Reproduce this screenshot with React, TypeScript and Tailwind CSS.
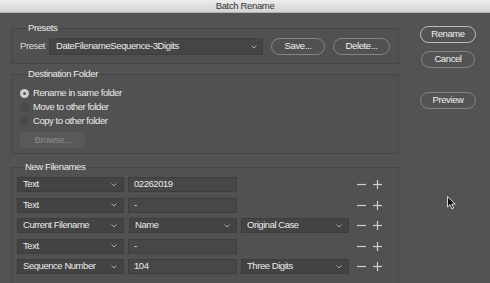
import React from 'react';

const font = { fontFamily: '"Liberation Sans", Arial, sans-serif' };

const Chevron = () => (
  <svg width="6" height="4" viewBox="0 0 6 4" className="shrink-0">
    <polyline points="0.5,0.5 3,3 5.5,0.5" fill="none" stroke="#a8a8a8" strokeWidth="1" />
  </svg>
);

const Select: React.FC<{ label: string; w: string; className?: string }> = ({ label, w, className }) => (
  <div className={`${w} h-[15px] flex items-center justify-between pl-[5px] pr-[6px] bg-[#434343] border border-[#3d3d3d] text-[9.5px] tracking-[-0.45px] text-[#ebebeb] ${className || ''}`}>
    <span>{label}</span>
    <Chevron />
  </div>
);

const Field: React.FC<{ value: string }> = ({ value }) => (
  <div className="w-[109px] h-[15px] flex items-center pl-[5px] bg-[#474747] border border-[#3e3e3e] text-[9.5px] tracking-[-0.45px] text-[#ebebeb]">
    {value}
  </div>
);

const PillButton: React.FC<{ label: string; w: string; primary?: boolean; className?: string }> = ({ label, w, primary, className }) => (
  <div
    className={`${w} h-[17px] flex items-center justify-center rounded-full border text-[9.5px] tracking-[-0.4px] text-[#f0f0f0] ${
      primary ? 'border-[#bdbdbd]' : 'border-[#858585]'
    } ${className || ''}`}
  >
    {label}
  </div>
);

const Radio: React.FC<{ label: string; checked?: boolean }> = ({ label, checked }) => (
  <div className="h-[14px] flex items-center">
    {checked ? (
      <div className="w-[9px] h-[9px] rounded-full bg-[#cfcfcf] flex items-center justify-center">
        <div className="w-[3px] h-[3px] rounded-full bg-[#5a5a5a]" />
      </div>
    ) : (
      <div className="w-[9px] h-[9px] rounded-full bg-[#4a4a4a] border border-[#474747]" />
    )}
    <span className="ml-[4px] text-[9.5px] tracking-[-0.45px] text-[#ebebeb]">{label}</span>
  </div>
);

const PlusMinus = () => (
  <div className="flex items-center ml-[8px] gap-[7px]">
    <svg width="9" height="9" viewBox="0 0 9 9">
      <line x1="0" y1="4.5" x2="9" y2="4.5" stroke="#cfcfcf" strokeWidth="1.2" />
    </svg>
    <svg width="9" height="9" viewBox="0 0 9 9">
      <line x1="0" y1="4.5" x2="9" y2="4.5" stroke="#cfcfcf" strokeWidth="1.2" />
      <line x1="4.5" y1="0" x2="4.5" y2="9" stroke="#cfcfcf" strokeWidth="1.2" />
    </svg>
  </div>
);

type Row = { first: string; second: { kind: 'field' | 'select'; value: string }; third?: string };

const rows: Row[] = [
  { first: 'Text', second: { kind: 'field', value: '02262019' } },
  { first: 'Text', second: { kind: 'field', value: '-' } },
  { first: 'Current Filename', second: { kind: 'select', value: 'Name' }, third: 'Original Case' },
  { first: 'Text', second: { kind: 'field', value: '-' } },
  { first: 'Sequence Number', second: { kind: 'field', value: '104' }, third: 'Three Digits' },
];

const Legend: React.FC<{ text: string }> = ({ text }) => (
  <legend className="ml-[6px] px-[2px] text-[9.5px] tracking-[-0.4px] leading-[12px] text-[#ebebeb]">{text}</legend>
);

export default function App() {
  return (
    <div className="w-[490px] h-[283px] bg-[#535353] overflow-hidden relative" style={font}>
      {/* title bar */}
      <div className="h-[13px] bg-gradient-to-b from-[#ececec] to-[#d4d4d4] border-b border-[#b4b4b4] flex items-center justify-center">
        <span className="text-[9.5px] tracking-[-0.35px] leading-none text-[#333]">Batch Rename</span>
      </div>

      <div className="flex">
        {/* left column */}
        <div className="ml-[11px] w-[388px] pt-[9px]">
          <fieldset className="border border-[#464646] bg-[#515151] px-[8px] pb-[8px]">
            <Legend text="Presets" />
            <div className="flex items-center pt-[4px]">
              <span className="text-[9.5px] tracking-[-0.4px] text-[#dcdcdc] w-[29px]">Preset</span>
              <div className="w-[214px] h-[17px] flex items-center justify-between pl-[6px] pr-[5px] bg-[#454545] border border-[#3f3f3f] text-[9.5px] tracking-[-0.4px] text-[#ebebeb]">
                <span>DateFilenameSequence-3Digits</span>
                <Chevron />
              </div>
              <PillButton label="Save..." w="w-[54px]" className="ml-[8px]" />
              <PillButton label="Delete..." w="w-[57px]" className="ml-[8px]" />
            </div>
          </fieldset>

          <fieldset className="mt-[4px] border border-[#464646] bg-[#515151] px-[8px] pb-[5px]">
            <Legend text="Destination Folder" />
            <div className="pt-[6px] flex flex-col">
              <Radio label="Rename in same folder" checked />
              <Radio label="Move to other folder" />
              <Radio label="Copy to other folder" />
            </div>
            <div className="mt-[4px] w-[65px] h-[16px] bg-[#595959] flex items-center justify-center text-[9.5px] tracking-[-0.4px] text-[#8c8c8c]">
              Browse...
            </div>
          </fieldset>

          <fieldset className="mt-[7px] border border-[#464646] bg-[#515151] pl-[5px] pb-[9px]">
            <Legend text="New Filenames" />
            <div className="pt-[4px] flex flex-col gap-[5.5px]">
              {rows.map((r, i) => (
                <div key={i} className="flex items-center h-[15px]">
                  <Select label={r.first} w="w-[107px]" />
                  <div className="ml-[4px]">
                    {r.second.kind === 'field' ? (
                      <Field value={r.second.value} />
                    ) : (
                      <Select label={r.second.value} w="w-[108px]" className="ml-[1px]" />
                    )}
                  </div>
                  <div className="ml-[4px] w-[108px]">
                    {r.third && <Select label={r.third} w="w-[108px]" />}
                  </div>
                  <PlusMinus />
                </div>
              ))}
            </div>
          </fieldset>
        </div>

        {/* right column */}
        <div className="ml-[21px] w-[56px] pt-[13px] flex flex-col items-center">
          <PillButton label="Rename" w="w-[56px]" primary />
          <PillButton label="Cancel" w="w-[54px]" className="mt-[8px]" />
          <PillButton label="Preview" w="w-[56px]" className="mt-[24px]" />
        </div>
      </div>

      {/* mouse cursor */}
      <svg className="absolute left-[447px] top-[196px]" width="10" height="14" viewBox="0 0 10 14">
        <path d="M0.5 0.5 L0.5 11 L3 8.6 L4.8 12.8 L6.6 12 L4.8 8 L8.2 8 Z" fill="#111" stroke="#fff" strokeWidth="0.8" />
      </svg>
    </div>
  );
}
